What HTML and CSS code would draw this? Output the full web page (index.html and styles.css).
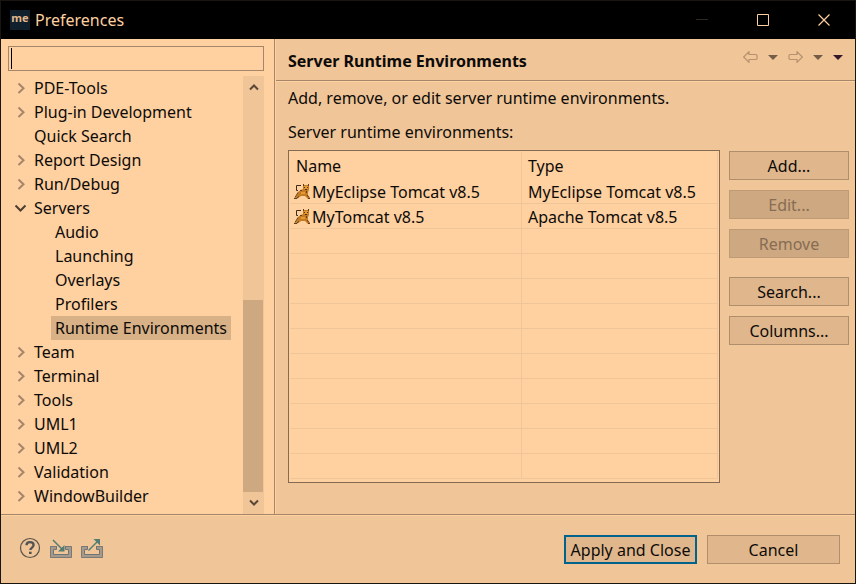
FILE: index.html
```html
<!DOCTYPE html>
<html lang="en">
<head>
<meta charset="utf-8">
<title>Preferences</title>
<link rel="stylesheet" href="styles.css">
</head>
<body>
<svg class="defs" aria-hidden="true">
  <symbol id="right" viewBox="0 0 16 24"><path d="M4.500 7.500l5 4.750-5 4.750" fill="none" stroke="#a5866a" stroke-width="2"/></symbol>
  <symbol id="down" viewBox="0 0 16 24"><path d="M1.500 9.500l5 5 5-5" fill="none" stroke="#4f3f31" stroke-width="2"/></symbol>
  <symbol id="cat" viewBox="0 0 16 16">
    <path d="M7 1.500H2.500V6.500H4" fill="none" stroke="#3d2c1c"/>
    <path d="M9 0h1v1h4V0h1v6l-1 2v3l2 3v1h-2l-3-3H7l-3 2-2 1H1v-1l2-3 1-3 3-2 2-1z" fill="#c57b21"/>
    <path d="M9.500 0v2M14.500 0v2M4 8.500l-3 5M0 14.500h3M5 12.500L3 14M13 11l2 2.500M14 14.500h2M6 6.500h2M12.500 7v2" fill="none" stroke="#63401c"/>
    <path d="M10 2h4v3h-4zM7 8h4v2H7z" fill="#e59a36"/>
    <path d="M10 3h1v1h-1zM13 3h1v1h-1zM11 5h2v1h-2z" fill="#4b3014"/>
  </symbol>
  <symbol id="tray" viewBox="0 0 22 22">
    <path d="M6.500 10.500H2v8.500h18v-8.500h-4.500" fill="none" stroke="#a79a88" stroke-width="3"/>
    <path d="M6 9.500H.5v11h21v-11H16" fill="none" stroke="#77797b"/>
    <path d="M6.500 9v3.500H3.500v5h15v-5h-3V9" fill="none" stroke="#6c747a"/>
  </symbol>
</svg>
<div class="window">
  <header class="titlebar">
    <svg class="logo" viewBox="0 0 20 20" aria-hidden="true"><rect width="20" height="20" fill="#10212d"/><text x="10" y="12" text-anchor="middle">me</text></svg>
    <span class="title">Preferences</span>
    <button class="winbtn" aria-label="Minimize" disabled><svg width="12" height="12"><path d="M0 5.500h12" stroke="#2e2820"/></svg></button>
    <button class="winbtn" aria-label="Maximize"><svg width="12" height="12"><path d="M.5.500h11v11H.5z" fill="none" stroke="#ffd0a0"/></svg></button>
    <button class="winbtn" aria-label="Close"><svg width="12" height="12"><path d="M.5.500l11 11M11.500.500l-11 11" stroke="#ffd0a0" stroke-width="1.200"/></svg></button>
  </header>
  <main class="content">
    <aside class="side">
      <input class="filter" type="text" aria-label="Filter">
      <div class="treebox">
        <ul class="tree">
          <li><button class="twist" aria-label="Expand"><svg><use href="#right"/></svg></button><span>PDE-Tools</span></li>
          <li><button class="twist" aria-label="Expand"><svg><use href="#right"/></svg></button><span>Plug-in Development</span></li>
          <li><i class="twist"></i><span>Quick Search</span></li>
          <li><button class="twist" aria-label="Expand"><svg><use href="#right"/></svg></button><span>Report Design</span></li>
          <li><button class="twist" aria-label="Expand"><svg><use href="#right"/></svg></button><span>Run/Debug</span></li>
          <li><button class="twist" aria-label="Collapse"><svg><use href="#down"/></svg></button><span>Servers</span>
            <ul class="children">
              <li><span>Audio</span></li>
              <li><span>Launching</span></li>
              <li><span>Overlays</span></li>
              <li><span>Profilers</span></li>
              <li><span class="selected">Runtime Environments</span></li>
            </ul>
          </li>
          <li><button class="twist" aria-label="Expand"><svg><use href="#right"/></svg></button><span>Team</span></li>
          <li><button class="twist" aria-label="Expand"><svg><use href="#right"/></svg></button><span>Terminal</span></li>
          <li><button class="twist" aria-label="Expand"><svg><use href="#right"/></svg></button><span>Tools</span></li>
          <li><button class="twist" aria-label="Expand"><svg><use href="#right"/></svg></button><span>UML1</span></li>
          <li><button class="twist" aria-label="Expand"><svg><use href="#right"/></svg></button><span>UML2</span></li>
          <li><button class="twist" aria-label="Expand"><svg><use href="#right"/></svg></button><span>Validation</span></li>
          <li><button class="twist" aria-label="Expand"><svg><use href="#right"/></svg></button><span>WindowBuilder</span></li>
        </ul>
        <div class="scrollbar">
          <button class="arrow" aria-label="Scroll up"><svg width="10" height="8"><path d="M1 6.500l4-4 4 4" fill="none" stroke="#5b4838" stroke-width="2"/></svg></button>
          <div class="track"></div>
          <div class="thumb"></div>
          <button class="arrow" aria-label="Scroll down"><svg width="10" height="8"><path d="M1 1.500l4 4 4-4" fill="none" stroke="#5b4838" stroke-width="2"/></svg></button>
        </div>
      </div>
    </aside>
    <section class="page">
      <div class="pagehead">
        <h1>Server Runtime Environments</h1>
        <nav class="history">
          <button aria-label="Back"><svg width="15" height="12"><path d="M.7 6L6 .7V3.500h7.200l.8 1v3l-.8 1H6v2.800z" fill="none" stroke="#b8916f" stroke-width="1.200"/></svg></button>
          <button aria-label="Back history"><svg width="10" height="5"><path d="M0 0h10L5 5z" fill="#745d48"/></svg></button>
          <button aria-label="Forward"><svg width="15" height="12"><path d="M14.300 6L9 .7V3.500H1.800l-.8 1v3l.8 1H9v2.800z" fill="none" stroke="#b8916f" stroke-width="1.200"/></svg></button>
          <button aria-label="Forward history"><svg width="10" height="5"><path d="M0 0h10L5 5z" fill="#745d48"/></svg></button>
          <button aria-label="View menu"><svg width="10" height="5"><path d="M0 0h10L5 5z" fill="#35182b"/></svg></button>
        </nav>
      </div>
      <div class="pagebody">
        <p>Add, remove, or edit server runtime environments.</p>
        <p id="caption">Server runtime environments:</p>
        <div class="columns">
          <div class="tablebox">
            <table aria-labelledby="caption">
              <thead><tr><th>Name</th><th>Type</th></tr></thead>
              <tbody>
                <tr><td><svg class="cat"><use href="#cat"/></svg>MyEclipse Tomcat v8.5</td><td>MyEclipse Tomcat v8.5</td></tr>
                <tr><td><svg class="cat"><use href="#cat"/></svg>MyTomcat v8.5</td><td>Apache Tomcat v8.5</td></tr>
                <tr><td></td><td></td></tr><tr><td></td><td></td></tr><tr><td></td><td></td></tr>
                <tr><td></td><td></td></tr><tr><td></td><td></td></tr><tr><td></td><td></td></tr>
                <tr><td></td><td></td></tr><tr><td></td><td></td></tr><tr><td></td><td></td></tr>
                <tr><td></td><td></td></tr>
              </tbody>
            </table>
          </div>
          <div class="actions">
            <button class="btn">Add...</button>
            <button class="btn" disabled>Edit...</button>
            <button class="btn" disabled>Remove</button>
            <button class="btn apart">Search...</button>
            <button class="btn">Columns...</button>
          </div>
        </div>
      </div>
    </section>
  </main>
  <footer class="footer">
    <div class="tools">
      <button aria-label="Help"><svg width="22" height="22" viewBox="0 0 22 22"><circle cx="11" cy="11" r="9.500" fill="none" stroke="#5a554e" stroke-width="1.200"/><path d="M7.500 8.300C7.500 6 9 5.200 11 5.200s3.600 1.100 3.600 2.900c0 2.400-3.300 2.500-3.300 5" fill="none" stroke="#515354" stroke-width="2.300"/><path d="M10 14.700h2.600V17H10z" fill="#515354"/></svg></button>
      <button aria-label="Import"><svg width="22" height="22" viewBox="0 0 22 22"><use href="#tray"/><path d="M3 3l9 9" stroke="#557c73" stroke-width="1.500"/><path d="M14.500 8v6.500H8z" fill="#557c73"/></svg></button>
      <button aria-label="Export"><svg width="22" height="22" viewBox="0 0 22 22"><use href="#tray"/><path d="M7.500 13.500L17 4" stroke="#557c73" stroke-width="1.500"/><path d="M12.500 2H19v6.500z" fill="#557c73"/></svg></button>
    </div>
    <button class="btn wide primary">Apply and Close</button>
    <button class="btn wide">Cancel</button>
  </footer>
</div>
</body>
</html>
```
FILE: styles.css
```css
* { box-sizing: border-box; }

body {
  margin: 0;
  font: 16px/24px "Noto Sans", "Open Sans", sans-serif;
  color: #0d0b09;
}

button {
  margin: 0;
  padding: 0;
  border: 0;
  background: none;
  font: inherit;
  color: inherit;
}

svg { display: block; }
.defs { display: none; }
ul { margin: 0; padding: 0; list-style: none; }

.window {
  display: flex;
  flex-direction: column;
  min-height: 100vh;
  border: 1px solid #1a150f;
  background: #f0c598;
}

.titlebar {
  display: flex;
  align-items: center;
  height: 38px;
  padding: 0 1px 0 9px;
  background: #000;
  color: #ffd0a0;
}
.logo { width: 20px; height: 20px; }
.logo text { font: bold 11px "Noto Sans", sans-serif; fill: #e0b78c; }
.title { flex: 1; margin-left: 5px; }
.winbtn {
  display: flex;
  justify-content: center;
  width: 61px;
}

.content {
  flex: 1;
  display: flex;
  border-bottom: 1px solid #a5866a;
}

.side {
  display: flex;
  flex-direction: column;
  width: 274px;
  padding: 7px 10px 0 0;
  border-right: 1px solid #a5866a;
  background: #ffd0a0;
}
.filter {
  height: 25px;
  margin: 0 0 5px 7px;
  padding: 0 4px;
  border: 1px solid #a5866a;
  outline: 0;
  background: linear-gradient(#000, #000) 2px 1px / 1px 21px no-repeat #ffd0a0;
  font: inherit;
}
.treebox { flex: 1; display: flex; }
.tree { flex: 1; padding-left: 13px; }
.tree li {
  display: flex;
  flex-wrap: wrap;
  min-height: 24px;
}
.tree span { padding: 0 4px; white-space: nowrap; }
.twist { width: 16px; height: 24px; }
.twist svg { width: 16px; height: 24px; }
.children { width: 100%; padding-left: 37px; }
.selected { background: #d9b187; }

.scrollbar {
  display: flex;
  flex-direction: column;
  width: 21px;
  background: #f0c598;
}
.arrow {
  display: flex;
  align-items: center;
  justify-content: center;
  height: 22px;
}
.track { flex: 202; }
.thumb { flex: 192; width: 20px; background: #cea880; }

.page { flex: 1; border-left: 1px solid #ffd0a0; }
.pagehead {
  display: flex;
  justify-content: space-between;
  height: 42px;
  padding: 10px 12px 0;
  border-bottom: 1px solid #a5866a;
}
h1 { margin: 0; font-size: 16px; line-height: 24px; }
.history { display: flex; gap: 10px; height: 16px; align-items: center; }

.pagebody {
  padding: 4px 6px 0 12px;
  border-top: 1px solid #ffd0a0;
}
p { margin: 0 0 10px; }
.columns { display: flex; gap: 9px; margin-top: -4px; }
.tablebox {
  flex: 1;
  height: 333px;
  padding: 1px;
  border: 1px solid #866b52;
  background: #ffd0a0;
}
table { width: 100%; table-layout: fixed; border-collapse: separate; border-spacing: 0; }
th, td {
  height: 25px;
  padding: 0 6px;
  border-right: 1px solid #f0c598;
  line-height: 22px;
  text-align: left;
  font-weight: normal;
}
th { height: 27px; padding-top: 1px; }
td { padding-top: 2px; border-bottom: 1px solid #f0c598; }
th:first-child { width: 232px; }
td:first-child { padding-left: 4px; }
.cat {
  display: inline-block;
  width: 16px;
  height: 16px;
  margin-right: 2px;
  vertical-align: -2px;
}

.actions {
  display: flex;
  flex-direction: column;
  gap: 10px;
  width: 120px;
  padding-top: 1px;
}
.btn {
  height: 29px;
  border: 1px solid #b08d6b;
  background: #e0b78c;
}
.btn:disabled { border-color: #c09a75; background: #cea880; color: #866d55; }
.apart { margin-top: 9px; }

.footer {
  display: flex;
  align-items: center;
  height: 68px;
  padding: 0 15px 0 18px;
  border-top: 1px solid #ffd0a0;
}
.tools { display: flex; gap: 9px; padding-bottom: 4px; }
.wide { width: 133px; margin-left: 10px; }
.primary { margin-left: auto; border: 2px solid #00638c; }
```
